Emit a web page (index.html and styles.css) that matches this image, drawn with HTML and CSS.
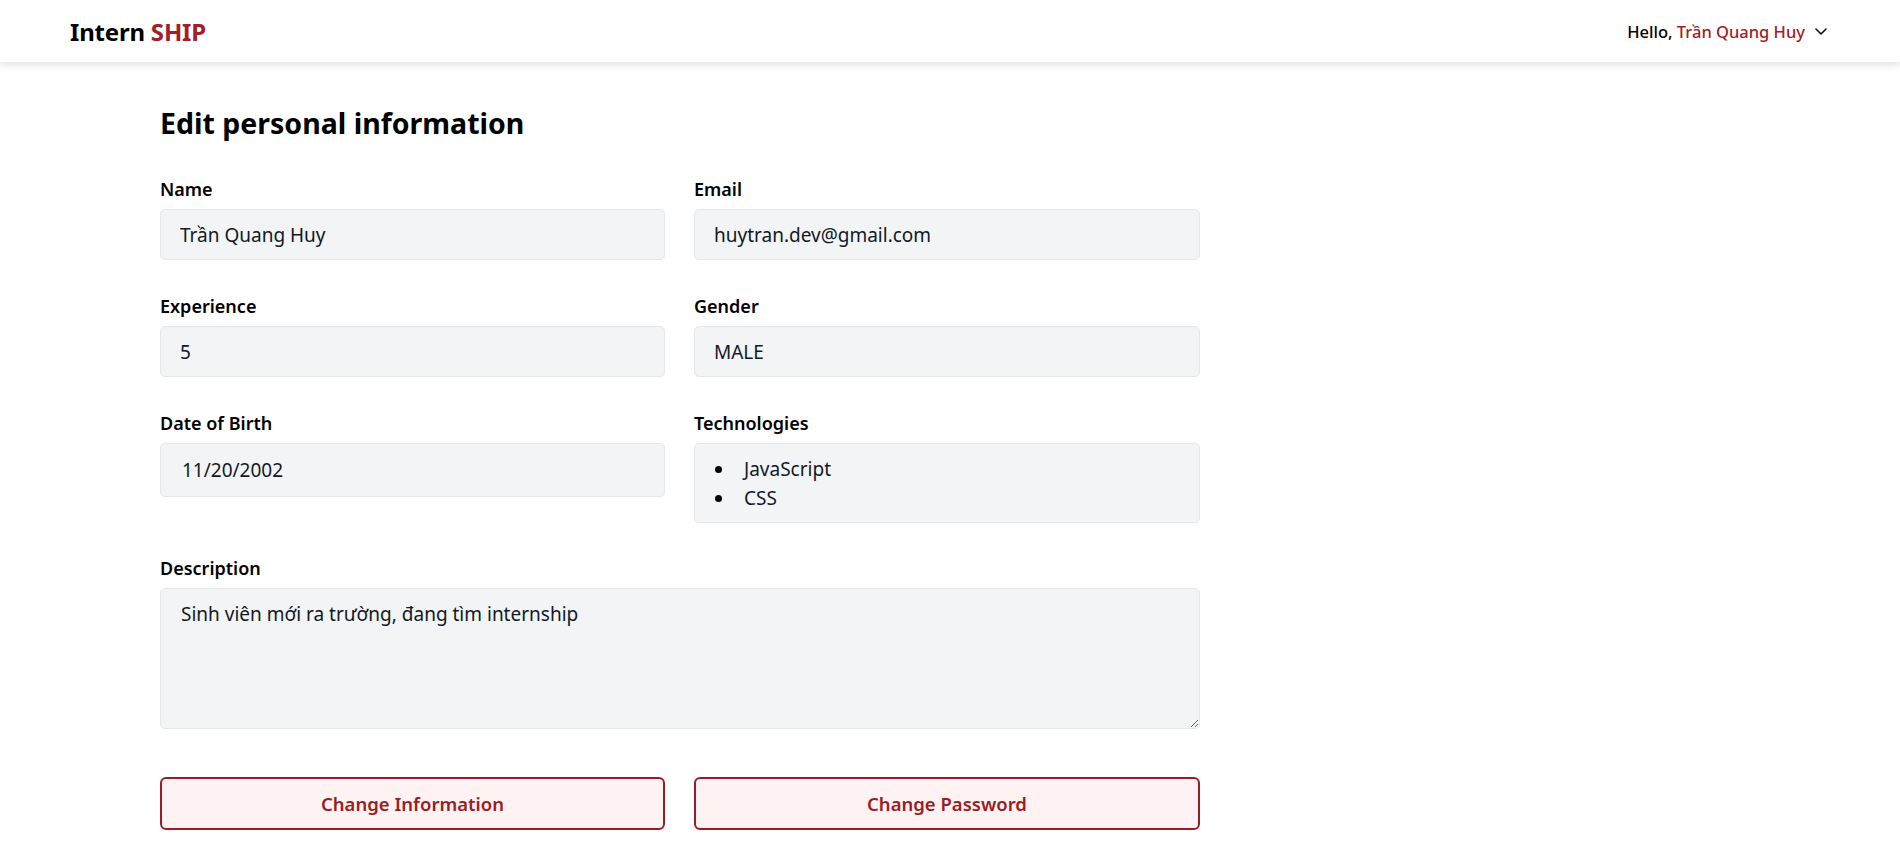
FILE: index.html
```html
<!DOCTYPE html>
<html lang="vi">
<head>
<meta charset="utf-8">
<title>Intern SHIP - Edit personal information</title>
<link rel="stylesheet" href="styles.css">
</head>
<body>
<header class="topbar">
  <div class="logo">Intern <span class="logo-accent">SHIP</span></div>
  <div class="user-menu">
    <span class="hello">Hello, <span class="user-name">Trần Quang Huy</span></span>
    <svg class="chevron" width="12" height="7" viewBox="0 0 12 7" fill="none" stroke="#111" stroke-width="1.6" stroke-linecap="round" stroke-linejoin="round"><polyline points="1,1 6,6 11,1"/></svg>
  </div>
</header>
<main class="page">
  <h1 class="title">Edit personal information</h1>
  <div class="form-grid">
    <div class="field">
      <label class="label">Name</label>
      <input class="input" type="text" value="Trần Quang Huy" readonly>
    </div>
    <div class="field">
      <label class="label">Email</label>
      <input class="input" type="text" value="huytran.dev@gmail.com" readonly>
    </div>
    <div class="field">
      <label class="label">Experience</label>
      <input class="input" type="text" value="5" readonly>
    </div>
    <div class="field">
      <label class="label">Gender</label>
      <input class="input" type="text" value="MALE" readonly>
    </div>
    <div class="field">
      <label class="label">Date of Birth</label>
      <div class="input input-date">11/20/2002</div>
    </div>
    <div class="field">
      <label class="label">Technologies</label>
      <div class="input input-list">
        <ul class="tech-list">
          <li>JavaScript</li>
          <li>CSS</li>
        </ul>
      </div>
    </div>
    <div class="field field-wide">
      <label class="label">Description</label>
      <textarea class="input textarea" readonly>Sinh viên mới ra trường, đang tìm internship</textarea>
    </div>
  </div>
  <div class="actions">
    <button class="btn" type="button">Change Information</button>
    <button class="btn" type="button">Change Password</button>
  </div>
</main>
</body>
</html>
```
FILE: styles.css
```css
* { box-sizing: border-box; }
html, body { margin: 0; padding: 0; background: #fff; }
body {
  font-family: "Noto Sans", "Open Sans", Arial, sans-serif;
  color: #111827;
}
.topbar {
  height: 62px;
  display: flex;
  align-items: center;
  justify-content: space-between;
  padding: 0 73px 0 70px;
  background: #fff;
  box-shadow: 0 3px 8px rgba(0,0,0,0.12);
}
.logo {
  font-size: 24px;
  font-weight: 700;
  color: #000;
  letter-spacing: -0.2px;
}
.logo-accent { color: #a0202a; }
.user-menu {
  display: flex;
  align-items: center;
  gap: 10px;
  font-size: 16.5px;
  font-weight: 500;
}
.hello { color: #000; }
.user-name { color: #a0202a; }
.chevron { display: block; margin-top: 1px; }
.page {
  width: 1040px;
  margin-left: 160px;
  padding-top: 41px;
}
.title {
  margin: 0 0 34px;
  font-size: 28.5px;
  line-height: 40px;
  font-weight: 700;
  color: #000;
}
.form-grid {
  display: grid;
  grid-template-columns: 505px 506px;
  column-gap: 29px;
  row-gap: 34px;
}
.field { display: flex; flex-direction: column; }
.field-wide { grid-column: 1 / -1; margin-top: -1px; }
.label {
  font-size: 18px;
  font-weight: 600;
  line-height: 24px;
  margin-bottom: 8px;
  color: #000;
}
.input {
  font-family: inherit;
  font-size: 19px;
  color: #111827;
  height: 51px;
  padding: 0 19px;
  background: #f3f4f6;
  border: 1px solid #e5e7eb;
  border-radius: 5px;
  outline: none;
  width: 100%;
}
.input-date {
  height: 54px;
  display: flex;
  align-items: center;
  padding-left: 21px;
}
.input-list {
  height: auto;
  padding: 11px 20px 9px;
}
.tech-list {
  list-style: none;
  margin: 0;
  padding: 0;
}
.tech-list li {
  display: flex;
  align-items: center;
  line-height: 29px;
}
.tech-list li::before {
  content: "";
  width: 7px;
  height: 7px;
  border-radius: 50%;
  background: #000;
  margin: 0 22px 0 0;
  flex: none;
}
.textarea {
  height: 141px;
  padding: 12px 20px;
  line-height: 26px;
  resize: vertical;
  display: block;
}
.actions {
  display: grid;
  grid-template-columns: 505px 506px;
  column-gap: 29px;
  margin-top: 48px;
}
.btn {
  height: 53px;
  background: #fef2f2;
  border: 2px solid #9b1c24;
  border-radius: 6px;
  color: #9b1c24;
  font-family: inherit;
  font-size: 18.5px;
  font-weight: 600;
  cursor: pointer;
}
```
